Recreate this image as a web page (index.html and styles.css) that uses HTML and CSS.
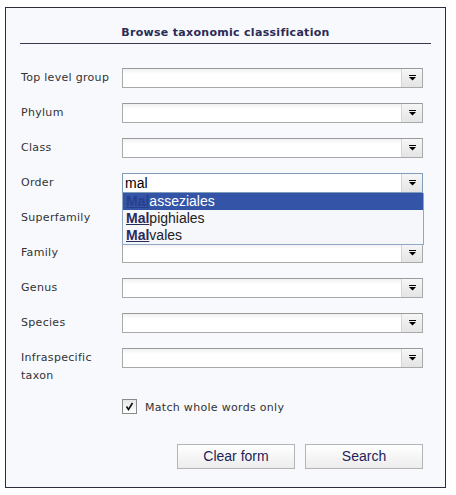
FILE: index.html
```html
<!DOCTYPE html>
<html>
<head>
<meta charset="utf-8">
<link rel="stylesheet" href="styles.css">
</head>
<body>
<div class="panel">
  <div class="title">Browse taxonomic classification</div>
  <div class="rows">
    <div class="row"><div class="label">Top level group</div><div class="combo"><div class="field"></div><div class="arrow"><svg width="8" height="6" viewBox="0 0 8 6"><rect x="0" y="0" width="7" height="1" fill="#000"/><path d="M0 2H7L3.5 5.5Z" fill="#000"/></svg></div></div></div>
    <div class="row"><div class="label">Phylum</div><div class="combo"><div class="field"></div><div class="arrow"><svg width="8" height="6" viewBox="0 0 8 6"><rect x="0" y="0" width="7" height="1" fill="#000"/><path d="M0 2H7L3.5 5.5Z" fill="#000"/></svg></div></div></div>
    <div class="row"><div class="label">Class</div><div class="combo"><div class="field"></div><div class="arrow"><svg width="8" height="6" viewBox="0 0 8 6"><rect x="0" y="0" width="7" height="1" fill="#000"/><path d="M0 2H7L3.5 5.5Z" fill="#000"/></svg></div></div></div>
    <div class="row"><div class="label">Order</div><div class="combo active"><div class="field">mal</div><div class="arrow"><svg width="8" height="6" viewBox="0 0 8 6"><rect x="0" y="0" width="7" height="1" fill="#000"/><path d="M0 2H7L3.5 5.5Z" fill="#000"/></svg></div>
      <ul class="suggest">
        <li class="sel"><b>Mal</b>asseziales</li>
        <li><b>Mal</b>pighiales</li>
        <li><b>Mal</b>vales</li>
      </ul>
    </div></div>
    <div class="row"><div class="label">Superfamily</div><div class="combo"><div class="field"></div><div class="arrow"><svg width="8" height="6" viewBox="0 0 8 6"><rect x="0" y="0" width="7" height="1" fill="#000"/><path d="M0 2H7L3.5 5.5Z" fill="#000"/></svg></div></div></div>
    <div class="row"><div class="label">Family</div><div class="combo"><div class="field"></div><div class="arrow"><svg width="8" height="6" viewBox="0 0 8 6"><rect x="0" y="0" width="7" height="1" fill="#000"/><path d="M0 2H7L3.5 5.5Z" fill="#000"/></svg></div></div></div>
    <div class="row"><div class="label">Genus</div><div class="combo"><div class="field"></div><div class="arrow"><svg width="8" height="6" viewBox="0 0 8 6"><rect x="0" y="0" width="7" height="1" fill="#000"/><path d="M0 2H7L3.5 5.5Z" fill="#000"/></svg></div></div></div>
    <div class="row"><div class="label">Species</div><div class="combo"><div class="field"></div><div class="arrow"><svg width="8" height="6" viewBox="0 0 8 6"><rect x="0" y="0" width="7" height="1" fill="#000"/><path d="M0 2H7L3.5 5.5Z" fill="#000"/></svg></div></div></div>
    <div class="row tall"><div class="label">Infraspecific<br>taxon</div><div class="combo"><div class="field"></div><div class="arrow"><svg width="8" height="6" viewBox="0 0 8 6"><rect x="0" y="0" width="7" height="1" fill="#000"/><path d="M0 2H7L3.5 5.5Z" fill="#000"/></svg></div></div></div>
  </div>
  <div class="check">
    <span class="box"><svg width="11" height="11" viewBox="0 0 11 11"><path d="M2.5 5.5L4.5 8.5L8.5 2" fill="none" stroke="#111" stroke-width="1.6"/></svg></span>
    <span class="check-label">Match whole words only</span>
  </div>
  <div class="buttons">
    <div class="btn">Clear form</div>
    <div class="btn">Search</div>
  </div>
</div>
</body>
</html>
```

FILE: styles.css
```css
html, body {
  margin: 0;
  padding: 0;
  background: #ffffff;
}
.panel {
  margin: 7px 0 0 5px;
  width: 411px;
  height: 479px;
  padding: 0 14px;
  border: 1px solid #2d2d3d;
  background: #f7f9fd;
  box-sizing: content-box;
  font-family: "DejaVu Sans", Verdana, sans-serif;
  font-size: 11px;
  color: #333;
}
.title {
  padding: 17px 0 2px;
  line-height: 16px;
  text-align: center;
  font-weight: bold;
  color: #2b2b55;
  border-bottom: 1px solid #3a3a4a;
  letter-spacing: 0.3px;
}
.rows {
  margin-top: 24px;
  display: flex;
  flex-direction: column;
  gap: 15px;
}
.row {
  display: flex;
  align-items: flex-start;
  height: 20px;
}
.row.tall {
  height: 37px;
}
.label {
  width: 102px;
  padding-left: 1px;
  box-sizing: border-box;
  line-height: 20px;
  letter-spacing: 0.3px;
}
.row.tall .label {
  line-height: 18px;
  padding-top: 1px;
}
.combo {
  position: relative;
  width: 301px;
  height: 20px;
  display: flex;
  border: 1px solid #a9a9a9;
  border-top-color: #9a9a9a;
  box-sizing: border-box;
  background: linear-gradient(#f0f0f0, #ffffff 5px);
}
.combo.active {
  border-color: #7f9db9;
  background: #fff;
}
.field {
  flex: 1;
  font-family: "Liberation Sans", Arial, sans-serif;
  font-size: 14px;
  line-height: 18px;
  padding-left: 2px;
  color: #000;
}
.arrow {
  width: 20px;
  border-left: 1px solid #d6d6d6;
  background: linear-gradient(#f6f6f6, #e4e4e4);
  display: flex;
  align-items: center;
  justify-content: center;
}
.arrow svg {
  margin-left: 1px;
}
.suggest {
  position: absolute;
  left: -1px;
  top: 19px;
  width: 302px;
  margin: 0;
  padding: 0;
  list-style: none;
  border: 1px solid #8fa6c6;
  border-top: none;
  background: #f5f7fa;
  box-sizing: border-box;
  z-index: 2;
  font-family: "Liberation Sans", Arial, sans-serif;
  font-size: 14px;
  color: #222;
}
.suggest li {
  height: 17px;
  line-height: 17px;
  padding-left: 3px;
}
.suggest b {
  text-decoration: underline;
  color: #2a2a5a;
}
.suggest li.sel {
  background: #3454a8;
  color: #fff;
}
.suggest li.sel b {
  color: #27408a;
}
.check {
  margin: 14px 0 0 102px;
  display: flex;
  align-items: center;
  height: 14px;
}
.box {
  width: 13px;
  height: 13px;
  border: 1px solid #8a8a8a;
  background: linear-gradient(#e6e6e6, #ffffff);
  display: flex;
  align-items: center;
  justify-content: center;
}
.check-label {
  margin-left: 8px;
  letter-spacing: 0.3px;
  padding-top: 3px;
}
.buttons {
  margin-top: 31px;
  display: flex;
  justify-content: flex-end;
  gap: 10px;
  padding-right: 8px;
}
.btn {
  width: 118px;
  height: 25px;
  box-sizing: border-box;
  border: 1px solid #b4b4b4;
  background: linear-gradient(#ffffff, #ececec);
  font-family: "Liberation Sans", Arial, sans-serif;
  font-size: 14px;
  color: #1f1f5a;
  text-align: center;
  line-height: 23px;
}
```
